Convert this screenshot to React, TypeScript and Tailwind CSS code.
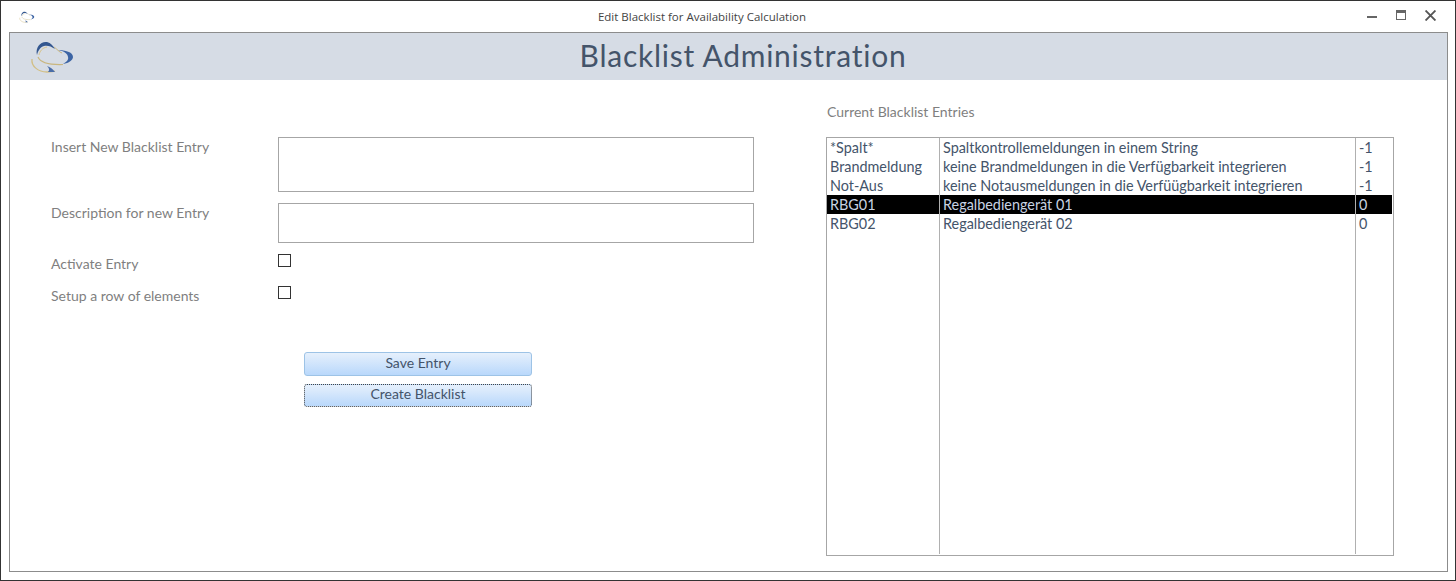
import React from 'react';

const labelFont = "font-['Lato','Liberation_Sans',sans-serif]";

const rows = [
  { key: '*Spalt*', text: 'Spaltkontrollemeldungen in einem String', value: '-1' },
  { key: 'Brandmeldung', text: 'keine Brandmeldungen in die Verfügbarkeit integrieren', value: '-1' },
  { key: 'Not-Aus', text: 'keine Notausmeldungen in die Verfüügbarkeit integrieren', value: '-1' },
  { key: 'RBG01', text: 'Regalbediengerät 01', value: '0', selected: true },
  { key: 'RBG02', text: 'Regalbediengerät 02', value: '0' },
];

const Logo: React.FC<{ className: string }> = ({ className }) => (
  <svg viewBox="30 39 45 34" fill="none" className={className}>
    <path d="M37 54C35 46 41 40 47 41C51 42 53 45 55 48C51 45 47 44 44 45C40 46 38 50 37 54Z" fill="#34578f" />
    <path d="M39 54C40 50 42 47 47 46" stroke="#d8c48c" strokeWidth="1" />
    <path d="M58 49C65 49 73 51 73 56C73 59 69 62 63 63C66 61 69 59 68 56C68 53 64 50 58 49Z" fill="#3c64a4" />
    <path d="M54 46C57 48 59 51 62 52" stroke="#c9b67e" strokeWidth="1" />
    <path d="M38 56C40 61 47 64 63 63.5" stroke="#c9b67e" strokeWidth="1.2" />
    <path d="M32 58C31 65 38 71 47 71C50 71 53 71 55 70" stroke="#d2bf86" strokeWidth="1.3" />
    <path d="M47 65C50 66 53 68 55 71C52 71 50 71 48 71C50 69 49 67 47 65Z" fill="#4a6da8" />
  </svg>
);

const Field: React.FC<{ label: string; boxClass: string; rowClass: string }> = ({ label, boxClass, rowClass }) => (
  <div className={`flex ${rowClass}`}>
    <div className="w-[227px] pt-[1px] text-[14px] leading-[18px] text-[#7f7f7f]">{label}</div>
    <div className={`w-[476px] border border-[#a6a6a6] ${boxClass}`} />
  </div>
);

const CheckRow: React.FC<{ label: string; rowClass: string }> = ({ label, rowClass }) => (
  <div className={`flex ${rowClass}`}>
    <div className="w-[227px] pt-[1px] text-[14px] leading-[18px] text-[#7f7f7f]">{label}</div>
    <div className="h-[13px] w-[13px] border border-[#333333]" />
  </div>
);

export default function App() {
  return (
    <div className={`h-[581px] w-[1456px] overflow-hidden border border-[#333333] bg-white ${labelFont}`}>
      {/* Title bar */}
      <div className="flex h-[31px] items-center pl-[18px] pr-[19px]">
        <Logo className="h-[12px] w-[16px]" />
        <div className="flex-1 pl-[2px] text-center font-['Open_Sans',sans-serif] text-[11.5px] text-[#444444]">
          Edit Blacklist for Availability Calculation
        </div>
        <div className="mb-[2px] flex items-start gap-[19px]">
          <div className="mt-[6px] h-[2px] w-[10px] bg-[#666666]" />
          <div className="h-[10px] w-[10px] border border-t-[3px] border-[#666666]" />
          <svg viewBox="0 0 10 10" className="h-[11px] w-[11px]" stroke="#555555" strokeWidth="1.7">
            <path d="M0.5 0.5L9.5 9.5M9.5 0.5L0.5 9.5" />
          </svg>
        </div>
      </div>

      {/* Form window */}
      <div className="ml-[8px] h-[540px] w-[1439px] border border-[#8c8c8c]">
        <div className="flex h-[47px] items-center bg-[#d6dce5]">
          <Logo className="ml-[20px] h-[34px] w-[45px]" />
          <div className="flex-1 pb-[2px] pr-[36px] text-center text-[30px] leading-[45px] tracking-[0.75px] text-[#44546a]">
            Blacklist Administration
          </div>
        </div>

        <div className="flex">
          {/* Left side */}
          <div className="w-[816px] pl-[41px] pt-[57px]">
            <Field label="Insert New Blacklist Entry" rowClass="mb-[11px]" boxClass="h-[55px]" />
            <Field label="Description for new Entry" rowClass="mb-[11px]" boxClass="h-[40px]" />
            <CheckRow label="Activate Entry" rowClass="mb-[13px]" />
            <CheckRow label="Setup a row of elements" rowClass="" />
            <div className="ml-[253px] mt-[47px] flex w-[228px] flex-col gap-[8px] text-[14px] text-[#44546a]">
              <button className="h-[24px] rounded-[3px] border border-[#9dc3e6] bg-gradient-to-b from-[#e6f0fc] to-[#b9d8fb] pb-[2px] leading-[20px]">
                Save Entry
              </button>
              <button className="h-[23px] rounded-[3px] border border-dotted border-[#444444] bg-gradient-to-b from-[#e6f0fc] to-[#b9d8fb] pb-[3px] leading-[18px]">
                Create Blacklist
              </button>
            </div>
          </div>

          {/* Right side */}
          <div className="w-[568px] pt-[23px]">
            <div className="mb-[16px] pl-[1px] text-[14px] leading-[18px] text-[#7f7f7f]">Current Blacklist Entries</div>
            <div className="h-[419px] w-[568px] border border-[#a6a6a6] pr-[1px] text-[14.4px] leading-[20px] text-[#44546a]">
              {rows.map((row) => (
                <div
                  key={row.key}
                  className={`flex h-[19px] ${row.selected ? 'bg-black text-[#c9d3e3]' : ''}`}
                >
                  <div className="w-[112px] shrink-0 pl-[3px]">{row.key}</div>
                  <div className="w-[416px] shrink-0 border-l border-[#b0b0b0] pl-[3px]">{row.text}</div>
                  <div className="flex-1 border-l border-[#b0b0b0] pl-[3px]">{row.value}</div>
                </div>
              ))}
              <div className="flex h-[321px]">
                <div className="w-[112px] shrink-0" />
                <div className="w-[416px] shrink-0 border-l border-[#b0b0b0]" />
                <div className="flex-1 border-l border-[#b0b0b0]" />
              </div>
            </div>
          </div>
        </div>
      </div>
    </div>
  );
}
